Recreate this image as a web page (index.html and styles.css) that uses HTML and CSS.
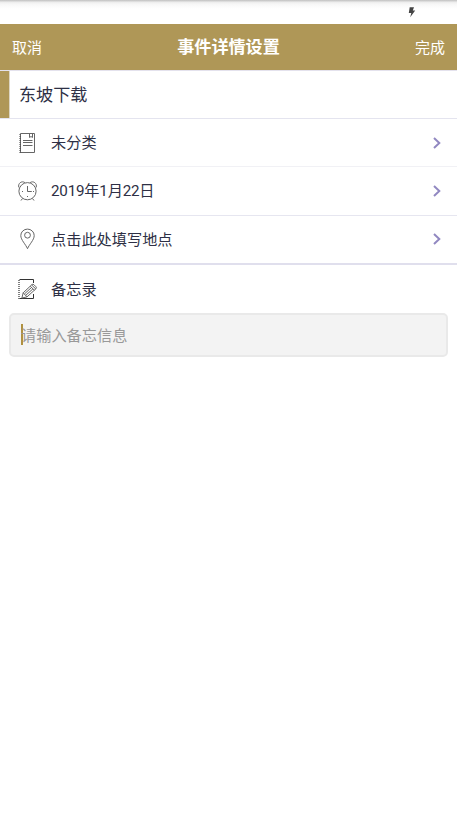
FILE: index.html
```html
<!DOCTYPE html>
<html lang="zh-CN">
<head>
<meta charset="utf-8">
<title>事件详情设置</title>
<link rel="stylesheet" href="styles.css">
</head>
<body>
<div class="status"><svg class="bolt" width="8" height="11" viewBox="0 0 8 11"><path d="M1.7.2H6L4.8 3.6H7.2L2.2 10.3 3.3 6H.8Z"/></svg></div>
<header class="bar">
  <span class="action">取消</span>
  <h1>事件详情设置</h1>
  <span class="action">完成</span>
</header>
<main>
  <div class="event"><span class="event-name">东坡下载</span></div>
  <div class="row category">
    <svg class="icon" width="20" height="22" viewBox="0 0 20 22"><path d="M3.5 1.5H17.5V20.5H3.5Z"/><path class="dots" d="M3.2 2V21"/><path d="M12.5 2V5.5L14 4.5 15.5 5.5V2"/><path d="M6 8.5H15.5M6 10.5H15.5M6 13.5H15.5"/></svg>
    <span class="label">未分类</span>
    <svg class="arrow" width="8" height="12" viewBox="0 0 8 12"><path d="M1 1 6.3 6 1 11"/></svg>
  </div>
  <div class="row date">
    <svg class="icon" width="20" height="22" viewBox="0 0 20 22"><circle cx="10.5" cy="11.2" r="8.6"/><path d="M10.5 6V11.5H14.8M1.8 7.4C.7 3.4 4.6.4 7.9 2.6M19.2 7.4C20.3 3.4 16.4.4 13.1 2.6M5.5 18.5 4 20.5M15.5 18.5 17 20.5M5 11.5H6M10.5 16V17M16 11.5H17"/></svg>
    <span class="label">2019年1月22日</span>
    <svg class="arrow" width="8" height="12" viewBox="0 0 8 12"><path d="M1 1 6.3 6 1 11"/></svg>
  </div>
  <div class="row place">
    <svg class="icon" width="20" height="22" viewBox="0 0 20 22"><path d="M10.5 20.7C8.7 16.3 3.8 12 3.8 7.5A6.7 6.4 0 0 1 17.2 7.5C17.2 12 12.3 16.3 10.5 20.7Z"/><circle cx="10.5" cy="7.2" r="2.9"/></svg>
    <span class="label">点击此处填写地点</span>
    <svg class="arrow" width="8" height="12" viewBox="0 0 8 12"><path d="M1 1 6.3 6 1 11"/></svg>
  </div>
  <div class="row memo">
    <svg class="icon" width="20" height="22" viewBox="0 0 20 22"><path class="page" d="M2.5 1.5H16.5V5M16.5 16V20.5H2.5"/><path class="dots" d="M2 2V21"/><path d="M4.9 20 6.2 14.8 14.9 6.6Q15.9 5.8 16.9 6.7L19 8.8Q19.9 9.8 18.9 10.8L10 18.9ZM6.2 14.8 10 18.9M13.2 8.2 17.4 12.2M14.6 6.9 18.8 11M7.6 15.8 14.6 9.4M8.9 17.2 15.9 10.9"/></svg>
    <span class="label">备忘录</span>
  </div>
  <div class="field"><span class="caret"></span><span class="placeholder">请输入备忘信息</span></div>
</main>
</body>
</html>
```
FILE: styles.css
```css
* { box-sizing: border-box; }
body {
  margin: 0;
  background: #fff;
  color: #2e3045;
  font-family: Roboto, "Noto Sans CJK SC", sans-serif;
  font-size: 15.2px;
}
.status {
  height: 24px;
  padding: 7px 41px 0 0;
  display: flex;
  justify-content: flex-end;
  align-items: flex-start;
  background: linear-gradient(#c4c4c4 0, #cfcfcf 1px, #ececec 2px, #f7f7f7 4px, #fefefe 8px, #fff 10px);
}
.bolt { fill: #444; }
.bar {
  height: 46px;
  padding: 0 12px;
  display: flex;
  align-items: center;
  justify-content: space-between;
  background: #af9757;
  color: #fff;
}
.bar h1 { margin: 0 0 1px; font-size: 17.1px; font-weight: 700; line-height: 24px; }
.action { padding-top: 1px; font-size: 15px; line-height: 22px; }
.event {
  height: 49px;
  display: flex;
  border-top: 1px solid #e4e2ed;
  border-bottom: 1px solid #e4e4ef;
}
.event-name {
  padding-left: 10px;
  border-left: 9px solid #af9757;
  box-shadow: inset 1px 0 #ddd6c4;
  font-size: 17.1px;
  line-height: 48px;
}
.row {
  height: 48px;
  padding: 0 16px 0 17px;
  display: flex;
  align-items: center;
  border-bottom: 1px solid #f1f1f5;
}
.date { height: 49px; border-color: #e6e6f0; }
.date .label { letter-spacing: -.2px; }
.place { height: 49px; padding-bottom: 1px; border-bottom: 2px solid #e0dfed; }
.place .label { padding-top: 1px; }
.memo { border: 0; }
.memo .label { padding-top: 1px; }
.icon { margin-right: 14px; fill: none; stroke: #666; stroke-width: 1; overflow: visible; }
.dots { stroke: #555; stroke-width: 1.5; stroke-dasharray: 1 1; }
.page { stroke: #333; }
.label { flex: 1; line-height: 22px; }
.arrow { fill: none; stroke: #9188c1; stroke-width: 2; }
.field {
  height: 44px;
  margin: 0 9px;
  padding-left: 10px;
  display: flex;
  align-items: center;
  border: 2px solid #e9e9e9;
  border-radius: 5px;
  background: #f3f3f3;
  color: #999;
}
.caret { flex: none; width: 2px; height: 21px; margin: 0 -2px 1px 0; background: #af9140; }
.placeholder { padding-top: 1px; line-height: 22px; }
```
